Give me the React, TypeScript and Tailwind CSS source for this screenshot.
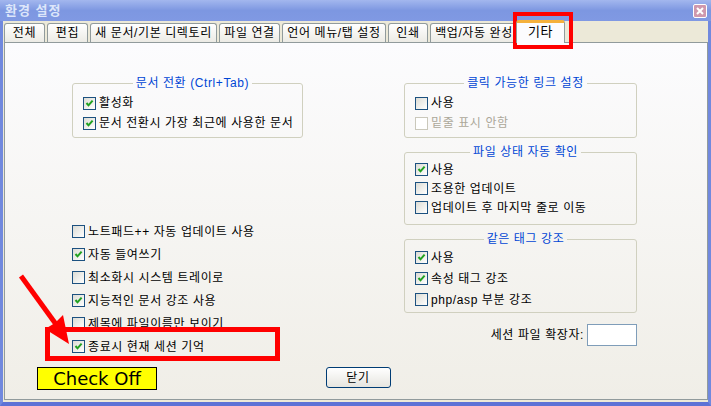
import type { ReactNode } from 'react';

function Check({ checked = false, disabled = false }: { checked?: boolean; disabled?: boolean }) {
  return (
    <span
      className={
        disabled
          ? 'relative h-[13px] w-[13px] shrink-0 border border-[#cac8bb] bg-white'
          : 'relative h-[13px] w-[13px] shrink-0 border border-[#1c5180] bg-gradient-to-br from-[#dcdcd5] to-white'
      }
    >
      {checked && (
        <svg className="absolute left-0 top-0" width="11" height="11" viewBox="0 0 11 11">
          <path d="M2.5 5 L4.5 7.3 L8.6 2.6" stroke="#21a121" strokeWidth="2" fill="none" />
        </svg>
      )}
    </span>
  );
}

function Row({
  label,
  checked,
  disabled,
  h = 'h-[20px]',
}: {
  label: ReactNode;
  checked?: boolean;
  disabled?: boolean;
  h?: string;
}) {
  return (
    <div className={`flex items-center gap-[3px] ${h}`}>
      <Check checked={checked} disabled={disabled} />
      <span className={disabled ? 'whitespace-nowrap text-[#aca899]' : 'whitespace-nowrap text-black'}>{label}</span>
    </div>
  );
}

function Group({ title, className, children }: { title: ReactNode; className: string; children: ReactNode }) {
  return (
    <fieldset className={`rounded-[3px] border border-[#d0d0bf] pl-[10px] ${className}`}>
      <legend className="mx-auto px-[3px] leading-[14px] text-[#0046d5]">{title}</legend>
      {children}
    </fieldset>
  );
}

const tabs = [
  { label: '전체', w: 'w-[41px]' },
  { label: '편집', w: 'w-[41px]' },
  { label: '새 문서/기본 디렉토리', w: 'w-[127px]' },
  { label: '파일 연결', w: 'w-[61px]' },
  { label: '언어 메뉴/탭 설정', w: 'w-[104px]' },
  { label: '인쇄', w: 'w-[40px]' },
  { label: '백업/자동 완성', w: 'w-[88px]' },
];

export default function App() {
  return (
    <div className="relative flex h-[406px] w-[711px] flex-col overflow-hidden bg-[#ece9d8] font-['Liberation_Sans','Noto_Sans_CJK_KR',sans-serif] text-[12px] leading-[14px] tracking-[0.6px]">
      {/* title bar */}
      <div className="flex h-[21px] shrink-0 items-center justify-between bg-gradient-to-b from-[#a3b7ee] via-[#7d97e1] to-[#8099e3] pl-[5px] pr-[4px]">
        <span className="text-[13px] font-bold tracking-[1px] text-[#dde6fa]">환경 설정</span>
        <span className="flex h-[14px] w-[14px] items-center justify-center rounded-[2px] border border-white bg-[#cf98ad]">
          <svg width="8" height="8" viewBox="0 0 8 8">
            <path d="M1 1 L7 7 M7 1 L1 7" stroke="white" strokeWidth="2" />
          </svg>
        </span>
      </div>

      <div className="flex flex-1 flex-col border-x-[3px] border-b-[4px] border-x-[#7189de] border-b-[#5d72d6]">
        {/* tabs */}
        <div className="flex h-[21px] shrink-0 items-end gap-[2px] pl-[1px]">
          {tabs.map((t) => (
            <div
              key={t.label}
              className={`flex h-[19px] shrink-0 items-center justify-center overflow-hidden whitespace-nowrap rounded-t-[3px] border border-b-0 border-[#919b9c] bg-gradient-to-b from-white to-[#ecebe5] ${t.w}`}
            >
              {t.label}
            </div>
          ))}
          <div className="relative z-10 -mb-px -ml-[4px] flex h-[23px] w-[49px] shrink-0 items-center justify-center rounded-t-[3px] border border-b-0 border-[#919b9c] border-t-[3px] border-t-[#f5b13c] bg-[#fcfcfe] pb-[2px] text-[13px]">
            기타
          </div>
        </div>

        {/* panel */}
        <div className="ml-[1px] mb-[2px] flex flex-1 flex-col border border-[#919b9c] bg-gradient-to-b from-[#fcfcfe] to-[#f0eee7]">
          <div className="flex items-start pl-[67px]">
            <div className="flex w-[231px] flex-col">
              <Group title="문서 전환 (Ctrl+Tab)" className="mt-[33px] pb-[4px] pt-[3px]">
                <Row label="활성화" checked />
                <Row label="문서 전환시 가장 최근에 사용한 문서" checked />
              </Group>
              <div className="mt-[82px] flex flex-col">
                <Row h="h-[23px]" label="노트패드++ 자동 업데이트 사용" />
                <Row h="h-[23px]" label="자동 들여쓰기" checked />
                <Row h="h-[23px]" label="최소화시 시스템 트레이로" />
                <Row h="h-[23px]" label="지능적인 문서 강조 사용" checked />
                <Row h="h-[23px]" label="제목에 파일이름만 보이기" />
                <Row h="h-[23px]" label="종료시 현재 세션 기억" checked />
              </div>
            </div>

            <div className="ml-[101px] flex w-[233px] flex-col">
              <Group title="클릭 가능한 링크 설정" className="mt-[33px] pb-[4px] pt-[3px]">
                <Row label="사용" />
                <Row label="밑줄 표시 안함" disabled />
              </Group>
              <Group title="파일 상태 자동 확인" className="mt-[7px] pb-[7px] pt-[1px]">
                <Row h="h-[19px]" label="사용" checked />
                <Row h="h-[19px]" label="조용한 업데이트" />
                <Row h="h-[19px]" label="업데이트 후 마지막 줄로 이동" />
              </Group>
              <Group title="같은 태그 강조" className="mt-[7px] pb-[2px] pt-[1px]">
                <Row h="h-[21px]" label="사용" checked />
                <Row h="h-[21px]" label="속성 태그 강조" checked />
                <Row h="h-[21px]" label="php/asp 부분 강조" />
              </Group>
              <div className="mt-[11px] flex items-center justify-end gap-[3px]">
                <span>세션 파일 확장자:</span>
                <span className="h-[22px] w-[50px] border border-[#7f9db9] bg-white" />
              </div>
            </div>
          </div>

          <div className="mt-[9px] flex justify-center pl-[4px]">
            <button className="h-[21px] w-[65px] rounded-[3px] border border-[#003c74] bg-gradient-to-b from-white to-[#e6e5df] text-black">
              닫기
            </button>
          </div>
        </div>
      </div>

      {/* annotations */}
      <div className="absolute left-[513px] top-[12px] h-[37px] w-[60px] border-[4px] border-[#ff0000]" />
      <div className="absolute left-[45px] top-[327px] h-[34px] w-[235px] border-[5px] border-[#ff0000]" />
      <div className="absolute left-[37px] top-[367px] flex h-[23px] w-[120px] items-center justify-center border border-black bg-[#ffff00] font-['DejaVu_Sans',sans-serif] text-[18px] leading-[20px] tracking-normal text-black">
        Check Off
      </div>
      <svg className="absolute left-0 top-0" width="711" height="406" viewBox="0 0 711 406" pointerEvents="none">
        <line x1="21" y1="276" x2="58" y2="327" stroke="#ff0000" strokeWidth="5" />
        <polygon points="69,344 45,329 55,323 63,315" fill="#ff0000" />
      </svg>
    </div>
  );
}
